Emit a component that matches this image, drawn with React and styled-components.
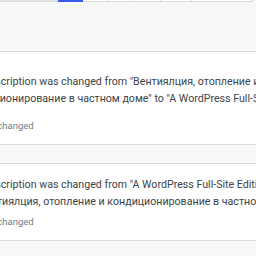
import styled, { createGlobalStyle } from "styled-components";

const GlobalStyle = createGlobalStyle`
  body {
    margin: 0;
    background: #f6f7f7;
    overflow: hidden;
    font-family: Roboto, "Open Sans", sans-serif;
  }
`;

const Page = styled.div`
  width: 256px;
  height: 256px;
  overflow: hidden;
`;

const TabBar = styled.div`
  display: flex;
  width: 253px;
  height: 2px;
`;

const Tab = styled.div`
  width: ${({ $w }) => $w}px;
  background: ${({ $active, $blank }) =>
    $active ? "#3858e9" : $blank ? "#e2e4e6" : "#ffffff"};
  border-bottom: ${({ $active }) => ($active ? "none" : "1px solid #dcdcde")};
  border-right: ${({ $last }) => ($last ? "1px solid #dcdcde" : "none")};
  box-shadow: ${({ $sep }) => ($sep ? "inset 1px 0 0 #dcdcde" : "none")};
`;

const List = styled.div`
  margin-top: 49px;
  display: flex;
  flex-direction: column;
  gap: 18px;
`;

const Entry = styled.div`
  background: #ffffff;
  border-top: 1px solid #dcdcde;
  border-bottom: 1px solid #dcdcde;
  padding: ${({ $first }) => ($first ? "21px" : "12px")} 0 11px;
`;

const Body = styled.div`
  margin-left: -37px;
  width: 420px;
`;

const Description = styled.p`
  margin: 0 0 ${({ $first }) => ($first ? "12px" : "5px")};
  font-size: 10.65px;
  line-height: 17px;
  color: #3c434a;
  white-space: nowrap;
`;

const Meta = styled.div`
  font-size: 9.5px;
  line-height: 14px;
  color: #787c82;
  margin-left: 4px;
`;

const tabs = [
  { w: 58, blank: true },
  { w: 25, active: true },
  { w: 24 },
  { w: 26, sep: true },
  { w: 27, sep: true },
  { w: 31, sep: true },
  { w: 61, sep: true, last: true },
];

const entries = [
  {
    lines: [
      "Site description was changed from \"Вентиялция, отопление и",
      "кондиционирование в частном доме\" to \"A WordPress Full-Site Editing Theme\"",
    ],
  },
  {
    lines: [
      "Site description was changed from \"A WordPress Full-Site Editing Theme\"",
      "to \"Вентиялция, отопление и кондиционирование в частном доме\"",
    ],
  },
];

export default function App() {
  return (
    <Page>
      <GlobalStyle />
      <TabBar>
        {tabs.map((t, i) => (
          <Tab key={i} $w={t.w} $active={t.active} $blank={t.blank} $sep={t.sep} $last={t.last} />
        ))}
      </TabBar>
      <List>
        {entries.map((e, i) => (
          <Entry key={i} $first={i === 0}>
            <Body>
              <Description $first={i === 0}>
                {e.lines[0]}
                <br />
                {e.lines[1]}
              </Description>
              <Meta>Option changed</Meta>
            </Body>
          </Entry>
        ))}
      </List>
    </Page>
  );
}
